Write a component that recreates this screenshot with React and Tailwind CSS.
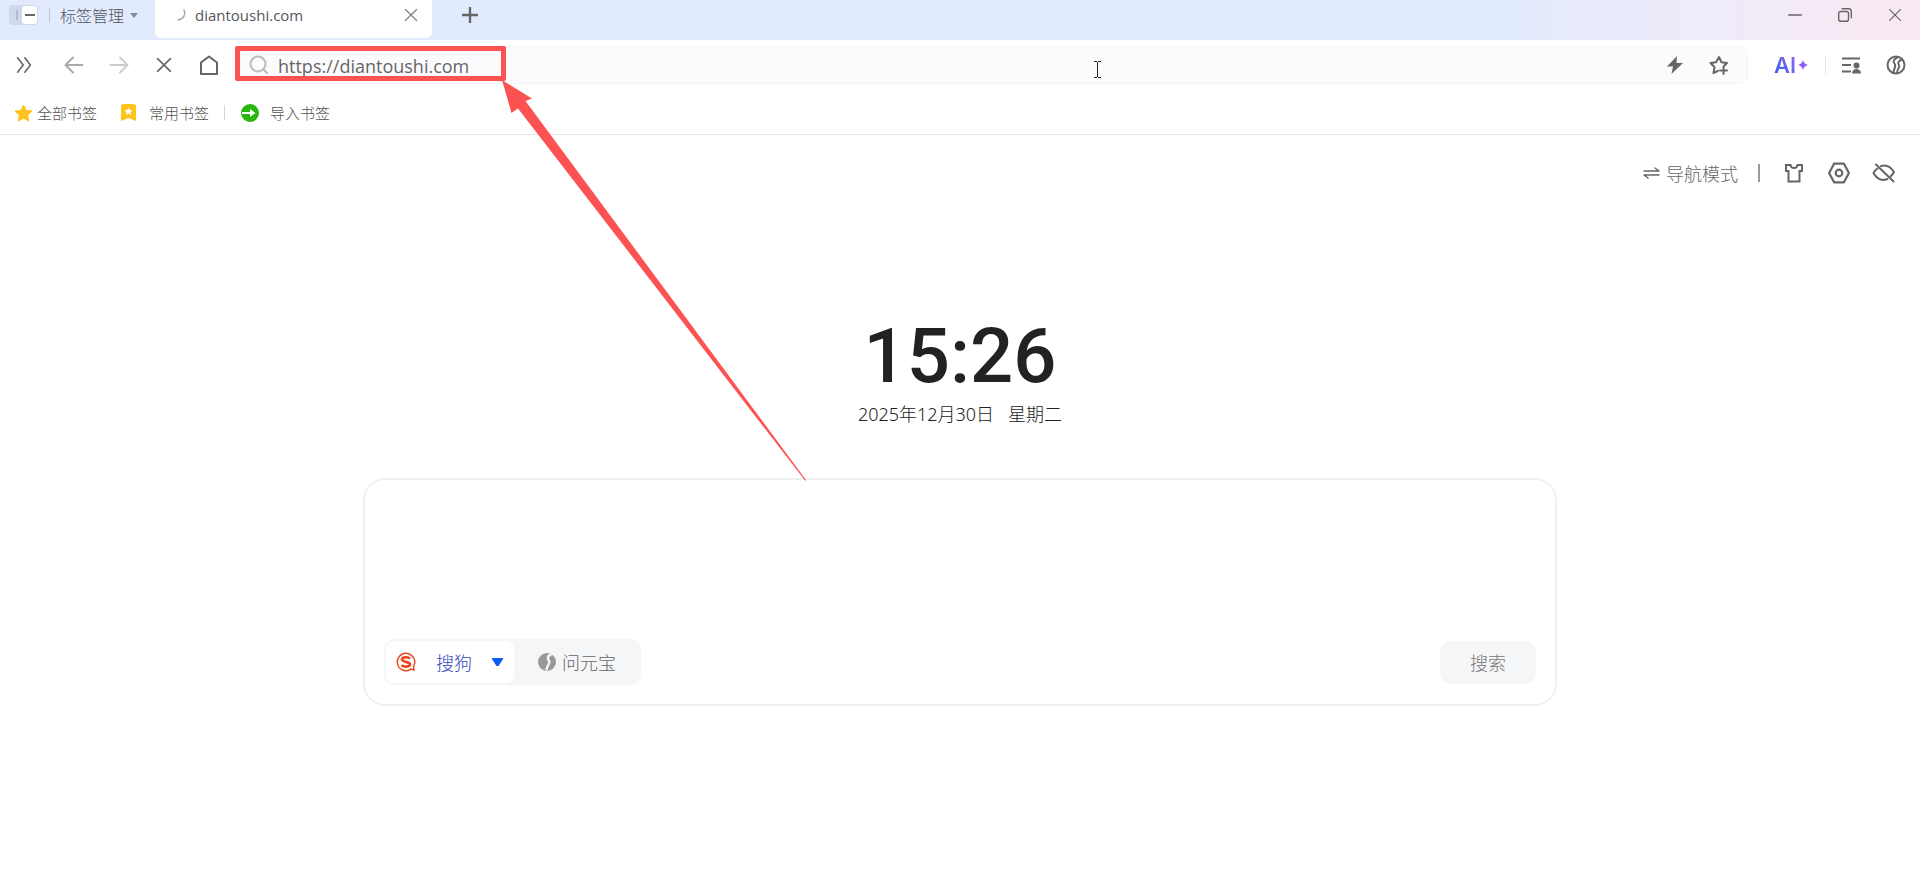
import React, { useState } from 'react';

const stroke = { fill: 'none', stroke: 'currentColor', strokeLinecap: 'round', strokeLinejoin: 'round' };

function Icon({ size = 20, width = 2, className = '', children }) {
  return (
    <svg width={size} height={size} viewBox="0 0 20 20" {...stroke} strokeWidth={width} className={`shrink-0 ${className}`} aria-hidden="true">
      {children}
    </svg>
  );
}

function NavButton({ label, className = 'w-[45px] text-[#666]', children }) {
  return (
    <button aria-label={label} className={`flex h-9 items-center justify-center ${className}`}>
      {children}
    </button>
  );
}

function TabStrip() {
  return (
    <header className="flex h-10 items-start bg-linear-to-r from-[#e2ebfe] from-78% via-[#eeebfa] via-88% to-[#f8e8f0] text-[#55555c]">
      <div className="flex h-[30px] w-[155px] items-center pl-[9px]">
        <button aria-label="侧边栏" className="flex h-5 w-[29px] items-center justify-end rounded-[4px] bg-[#d0d9eb] p-px">
          <span className="mr-1 h-[10px] w-[2px] bg-[#b3bccd]" />
          <span className="flex h-full w-[15px] items-center justify-center rounded-[3px] bg-white">
            <span className="h-[2px] w-[10px] bg-[#666]" />
          </span>
        </button>
        <span className="ml-[11px] h-[15px] w-px bg-[#bcc5d6]" />
        <button className="ml-[10px] flex items-center gap-[6px] whitespace-nowrap text-[16px] leading-5">
          标签管理
          <svg width="8" height="5" viewBox="0 0 8 5" aria-hidden="true"><path d="M0 0h8L4 5z" fill="#83889a" /></svg>
        </button>
      </div>
      <div className="flex h-[38px] w-[277px] items-start rounded-b-[6px] bg-white pl-[22px]">
        <div className="flex h-[30px] w-full items-center">
          <svg width="10" height="12" viewBox="0 0 10 12" {...stroke} stroke="#aaa" strokeWidth="1.5" aria-hidden="true">
            <path d="M7 1c2 4 0 9-6 10" />
          </svg>
          <span className="ml-2 font-['Open_Sans'] text-[15px] leading-5 font-normal">diantoushi.com</span>
          <button aria-label="关闭标签页" className="mr-[13px] ml-auto flex size-4 items-center justify-center text-[#888]">
            <Icon size={14} width={2}><path d="M2 2l16 16M18 2L2 18" /></Icon>
          </button>
        </div>
      </div>
      <button aria-label="新建标签页" className="ml-[30px] flex h-[30px] w-4 items-center justify-center text-[#666]">
        <Icon size={16} width={3}><path d="M10 1v18M1 10h18" /></Icon>
      </button>
      <div className="ml-auto flex h-[30px] text-[#666]">
        <button aria-label="最小化" className="flex w-[50px] items-center justify-center">
          <Icon size={14} width={2}><path d="M1 10h18" /></Icon>
        </button>
        <button aria-label="还原" className="flex w-[50px] items-center justify-center">
          <Icon size={14} width={2}>
            <rect x="1" y="5" width="14" height="14" rx="3" />
            <path d="M6 1h9a4 4 0 0 1 4 4v9" />
          </Icon>
        </button>
        <button aria-label="关闭" className="flex w-[50px] items-center justify-center">
          <Icon size={12} width={2}><path d="M1 1l18 18M19 1L1 19" /></Icon>
        </button>
      </div>
    </header>
  );
}

function AddressBar() {
  const [url, setUrl] = useState('https://diantoushi.com');

  return (
    <div className="relative ml-1 flex h-[38px] flex-1 items-center rounded-lg border border-[#f5f5f7] bg-[#fbfbfd] pr-[18px] pl-[13px]">
      <Icon size={20} width={2} className="text-[#bbb]">
        <circle cx="9" cy="9" r="7.5" />
        <path d="M14.5 14.5L18 18" />
      </Icon>
      <input
        aria-label="地址栏"
        value={url}
        onChange={(e) => setUrl(e.target.value)}
        className="mt-[2px] ml-[9px] min-w-0 flex-1 bg-transparent font-['Open_Sans'] text-[18px] leading-6 font-normal text-[#666] outline-none"
      />
      <button aria-label="极速" className="text-[#666]">
        <svg width="16" height="18" viewBox="0 0 16 18" fill="currentColor" aria-hidden="true"><path d="M10 0L0 10.500h6L4.500 18 16 7H9.500z" /></svg>
      </button>
      <button aria-label="收藏" className="ml-[26px] text-[#666]">
        <Icon size={20} width={2}>
          <path d="M9 15.800L4.500 18l1-6-4-4 5.500-.8L10 2l2.500 5.200L18 8l-3 3" />
          <path d="M14.500 12v7M11 15.500h7" />
        </Icon>
      </button>

      {/* highlight around the typed address */}
      <div className="pointer-events-none absolute -top-px -left-px h-[35px] w-[271px] rounded-[2px] border-5 border-[#fc5252]" />
      <svg className="pointer-events-none absolute top-8 left-[266px] z-10" width="310" height="404" viewBox="0 0 310 404" aria-hidden="true">
        <path d="M0 1L30 19.500l-6.500 2.500L304 401l-.8.8L16 29.500l-6.500 4.500z" fill="#fc5252" />
      </svg>
      <svg className="pointer-events-none absolute top-[14px] left-1/2 ml-[102px]" width="9" height="17" viewBox="0 0 9 17" fill="none" stroke="#222" strokeWidth="1" aria-hidden="true">
        <path d="M1 .5h3M5 .5h3M4.500 1v15M1 16.500h3M5 16.500h3" />
      </svg>
    </div>
  );
}

function Toolbar() {
  return (
    <div className="flex h-[50px] items-center">
      <NavButton label="展开" className="mr-[3px] w-12 text-[#666]">
        <Icon size={16} width={2}><path d="M2 1l7 9-7 9M11 1l7 9-7 9" /></Icon>
      </NavButton>
      <NavButton label="后退" className="w-[45px] text-[#aaa]">
        <Icon><path d="M18.500 10H2M9 2.500L1.500 10 9 17.500" /></Icon>
      </NavButton>
      <NavButton label="前进" className="w-[45px] text-[#ccc]">
        <Icon><path d="M1.500 10H18M11 2.500l7.500 7.500-7.500 7.500" /></Icon>
      </NavButton>
      <NavButton label="停止">
        <Icon size={16} width={2}><path d="M2 2l16 16M18 2L2 18" /></Icon>
      </NavButton>
      <NavButton label="主页">
        <Icon width={2}><path d="M2 7.500l8-6 8 6V19H2z" /></Icon>
      </NavButton>
      <AddressBar />
      <div className="flex items-center pr-[14px] pl-[26px] text-[#666]">
        <button aria-label="AI+" className="flex items-center gap-[2px]">
          <span className="bg-linear-to-tr from-[#0f62e6] to-[#9a62f0] bg-clip-text font-[Inter] text-[22px] leading-6 font-semibold text-transparent">AI</span>
          <svg width="10" height="10" viewBox="0 0 10 10" aria-hidden="true"><path d="M5 0q1 4 5 5-4 1-5 5-1-4-5-5 4-1 5-5z" fill="#9360ee" /></svg>
        </button>
        <span className="ml-[17px] h-5 w-px bg-[#e6e6e6]" />
        <button aria-label="菜单" className="ml-[15px]">
          <Icon width={2}>
            <path strokeLinecap="butt" d="M1 3.500h18M1 10h9M1 16.500h9" />
            <circle cx="15.500" cy="10.500" r="3" fill="currentColor" stroke="none" />
            <path d="M11 18.500c0-6 9-6 9 0z" fill="currentColor" stroke="none" />
          </Icon>
        </button>
        <button aria-label="元宝" className="ml-[25px]">
          <Icon width={2}>
            <circle cx="10" cy="10" r="8.500" />
            <path d="M12 2C8 4 6.500 6 8.500 8.500 11 11.500 7.500 13 7.500 18M16 4.500c-4 1.500-4.500 3.500-3 5.500 1.500 2.500-2 3.500-2 8" />
          </Icon>
        </button>
      </div>
    </div>
  );
}

function BookmarkBar() {
  return (
    <nav className="flex h-[45px] items-center border-b border-[#e6e6e6] pt-px pl-[14px] text-[15px] leading-5 text-[#555]">
      <button className="flex items-center gap-[4px]">
        <svg width="19" height="18" viewBox="0 0 19 18" fill="#fec31c" stroke="#fec31c" strokeLinejoin="round" aria-hidden="true">
          <path d="M9.500 1l2.600 5.300 5.900.8-4.300 4 1 5.900-5.200-2.800L4.300 17l1-5.900L1 7.100l5.900-.8z" />
        </svg>
        全部书签
      </button>
      <button className="ml-6 flex items-center gap-[13px]">
        <svg width="15" height="17" viewBox="0 0 15 17" aria-hidden="true">
          <path d="M2.500 0h10A2.500 2.500 0 0 1 15 2.500V17l-7.500-3L0 17V2.500A2.500 2.500 0 0 1 2.500 0z" fill="#fec31c" />
          <path d="M7.500 3.500l1.200 2.600 2.800.3-2.100 1.900.6 2.700-2.500-1.400L5 11l.6-2.700-2.100-1.900 2.800-.3z" fill="#fff" />
        </svg>
        常用书签
      </button>
      <span className="ml-[15px] h-[15px] w-px bg-[#d5d5d5]" />
      <button className="ml-4 flex items-center gap-[11px]">
        <svg width="18" height="18" viewBox="0 0 18 18" aria-hidden="true">
          <circle cx="9" cy="9" r="9" fill="#2bb50f" />
          <path d="M1 8h8V5l5.500 4L9 13v-3H1z" fill="#fff" />
        </svg>
        导入书签
      </button>
    </nav>
  );
}

function PageTools() {
  return (
    <div className="flex h-6 items-center justify-end pr-[24px] text-[#666]">
      <button className="flex items-center gap-[6px] text-[18px] leading-6 text-[#666]">
        <svg width="17" height="12" viewBox="0 0 17 12" {...stroke} strokeWidth="1.500" aria-hidden="true">
          <path d="M1 4h15l-4-3M16 8H1l4 3" />
        </svg>
        导航模式
      </button>
      <span className="ml-[20px] h-[18px] w-[2px] bg-[#999]" />
      <button aria-label="皮肤" className="ml-6">
        <Icon width={2}><path strokeLinejoin="miter" d="M2 2h4.500c.5 4 6.500 4 7 0H18v6h-2.500v10.500h-11V8H2z" /></Icon>
      </button>
      <button aria-label="设置" className="ml-[24px]">
        <Icon size={22}>
          <path d="M5.500 1.500h9L19 10l-4.500 8.500h-9L1 10z" />
          <circle cx="10" cy="10" r="3" />
        </Icon>
      </button>
      <button aria-label="隐藏" className="ml-[22px]">
        <svg width="24" height="20" viewBox="0 0 24 20" {...stroke} strokeWidth="2" aria-hidden="true">
          <path d="M9 3c6-2 10 1 13 6-1 2-2 3-3.500 4.500M5.500 5.500Q3 7 1.500 10c4 7 9 8 14 6" />
          <path d="M4 1.500L21.500 18.500" />
        </svg>
      </button>
    </div>
  );
}

function SearchBox() {
  const [query, setQuery] = useState('');

  return (
    <form onSubmit={(e) => e.preventDefault()} className="mx-auto mt-[50px] flex w-full max-w-[1194px] flex-col rounded-[22px] border-2 border-[#eff0f0] px-[19px] pb-[19px]">
      <textarea aria-label="搜索内容" value={query} onChange={(e) => setQuery(e.target.value)} className="h-[159px] resize-none bg-transparent outline-none" />
      <div className="flex items-center justify-between text-[18px] leading-6">
        <div className="flex h-[46px] rounded-[10px] bg-[#f5f6f8] p-[2px]">
          <button type="button" className="flex w-[128px] items-center rounded-[8px] bg-white pl-[10px] text-[#2f48c0]">
            <svg width="20" height="20" viewBox="0 0 20 20" fill="none" stroke="#e84a22" aria-hidden="true">
              <path d="M15.500 16.800A8.700 8.700 0 1 1 17.500 14.500L18 18l-3-1" strokeWidth="1.500" />
              <path d="M14 6.500C11 4.500 6 5 6 7.500c0 2.700 8 2 8 4.800 0 2.700-6 3-8.500 1" strokeWidth="2.700" />
            </svg>
            <span className="ml-5">搜狗</span>
            <svg width="11" height="8" viewBox="0 0 11 8" className="ml-5" aria-hidden="true"><path d="M0 0h11v1L6.500 8h-2L0 1z" fill="#0a5cf5" /></svg>
          </button>
          <button type="button" className="flex items-center gap-[6px] pr-[23px] pl-[24px] text-[#666]">
            <svg width="18" height="18" viewBox="0 0 18 18" aria-hidden="true">
              <circle cx="9" cy="9" r="9" fill="#999" />
              <path d="M13.500 1C9 3 9.500 5.500 11 8c1.500 3-2.500 4-2.500 9.500" fill="none" stroke="#f5f6f8" strokeWidth="2.500" />
            </svg>
            问元宝
          </button>
        </div>
        <button type="submit" className="h-[43px] w-[96px] rounded-[10px] bg-[#f5f6f8] text-[#777]">搜索</button>
      </div>
    </form>
  );
}

export default function App() {
  return (
    <div className="min-h-screen bg-white font-['Noto_Sans_CJK_SC',sans-serif] font-light">
      <TabStrip />
      <Toolbar />
      <BookmarkBar />
      <main className="pt-[26px]">
        <PageTools />
        <div className="mt-[127px] text-center text-[#222]">
          <time className="block font-[Roboto] text-[76px] leading-[88px] font-medium">15:26</time>
          <p className="flex justify-center gap-[14px] font-['Noto_Sans','Noto_Sans_CJK_SC',sans-serif] text-[18px] leading-7 text-[#222]">
            <span>2025年12月30日</span>
            <span>星期二</span>
          </p>
        </div>
        <SearchBox />
      </main>
    </div>
  );
}
